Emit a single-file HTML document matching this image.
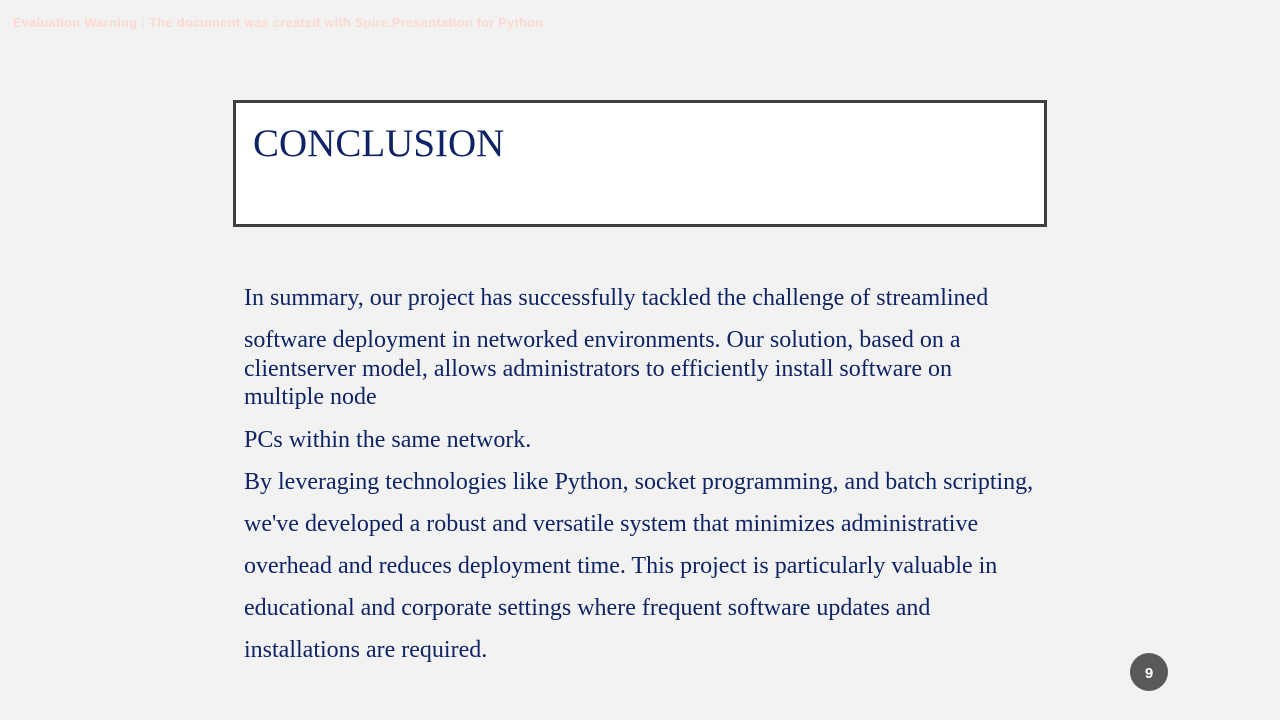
<!DOCTYPE html>
<html><head><style>
body{margin:0;width:1280px;height:720px;background:#f2f2f2;position:relative;overflow:hidden;font-family:"Liberation Serif",serif;}
.warn{position:absolute;left:13px;top:15px;font:bold 13px "Liberation Sans",sans-serif;color:#fcd9d2;letter-spacing:0.18px;}
.box{position:absolute;left:233px;top:100px;width:808px;height:121px;border:3px solid #404040;background:#fff;}
.title{position:absolute;left:253px;top:121px;font-size:39px;color:#0e2466;}
.p{position:absolute;left:244px;color:#0e2466;font-size:24px;white-space:nowrap;}
.num{position:absolute;left:1130px;top:653px;width:38px;height:38px;border-radius:50%;background:#595959;color:#fff;font:bold 15px "Liberation Sans",sans-serif;text-align:center;line-height:42px;}
</style></head><body>
<div class="warn">Evaluation Warning : The document was created with Spire.Presentation for Python</div>
<div class="box"></div>
<div class="title">CONCLUSION</div>
<div class="p" style="top:285px">In summary, our project has successfully tackled the challenge of streamlined</div>
<div class="p" style="top:327px">software deployment in networked environments. Our solution, based on a</div>
<div class="p" style="top:356px">clientserver model, allows administrators to efficiently install software on</div>
<div class="p" style="top:384px">multiple node</div>
<div class="p" style="top:427px">PCs within the same network.</div>
<div class="p" style="top:469px">By leveraging technologies like Python, socket programming, and batch scripting,</div>
<div class="p" style="top:511px">we've developed a robust and versatile system that minimizes administrative</div>
<div class="p" style="top:553px">overhead and reduces deployment time. This project is particularly valuable in</div>
<div class="p" style="top:595px">educational and corporate settings where frequent software updates and</div>
<div class="p" style="top:637px">installations are required.</div>
<div class="num">9</div>
</body></html>
